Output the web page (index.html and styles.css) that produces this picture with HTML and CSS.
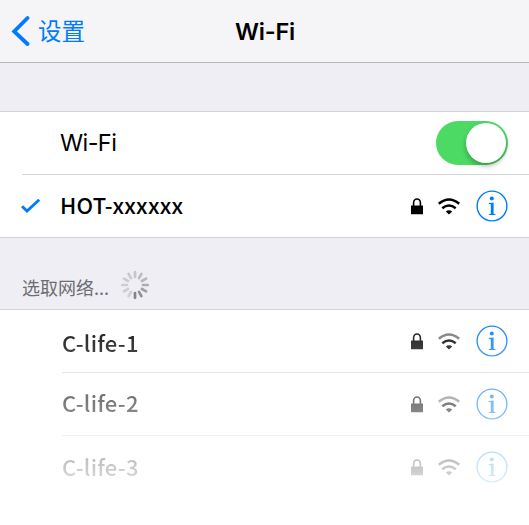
FILE: index.html
```html
<!DOCTYPE html>
<html lang="zh-CN">
<head>
<meta charset="utf-8">
<title>Wi-Fi</title>
<link rel="stylesheet" href="styles.css">
</head>
<body>
<svg class="symbols" width="0" height="0">
  <symbol id="lock" viewBox="0 0 12 17">
    <path d="M2.6 8V4.8a3.4 3.8 0 0 1 6.8 0V8" fill="none" stroke="currentColor" stroke-width="1.6"/>
    <rect x="0" y="7.6" width="12" height="8.6" rx=".5" fill="currentColor"/>
  </symbol>
  <symbol id="wifi" viewBox="0 0 22 17">
    <path d="M.8 5.8Q11-2.8 21.2 5.8" fill="none" stroke="var(--outer, currentColor)" stroke-width="2.5"/>
    <path d="M4.3 10.3Q11 4.7 17.7 10.3" fill="none" stroke="currentColor" stroke-width="2.5"/>
    <path d="M7.8 13.5Q11 11 14.2 13.5L11 16.6Z" fill="currentColor"/>
  </symbol>
  <symbol id="info" viewBox="0 0 32 32">
    <circle cx="16" cy="16" r="14.9" fill="none" stroke="currentColor" stroke-width="1.4"/>
    <circle cx="15.8" cy="8.4" r="2" fill="currentColor"/>
    <path d="M12.8 13.1l4.8-.7v11.4l2 .4v.8h-6.8v-.8l2-.4v-9.5l-2-.3z" fill="currentColor"/>
  </symbol>
</svg>
<header class="navbar">
  <div class="back">
    <svg width="20" height="32" viewBox="0 0 20 32"><path d="M17.5 3L4.2 16.5 17.5 29" fill="none" stroke="currentColor" stroke-width="3.8" stroke-linecap="round"/></svg>
    <span>设置</span>
  </div>
  <h1>Wi-Fi</h1>
</header>
<section class="group">
  <div class="row">
    <span class="name plain">Wi-Fi</span>
    <span class="switch"><span class="knob"></span></span>
  </div>
  <div class="row connected">
    <svg class="check" width="20" height="16" viewBox="0 0 20 16"><path d="M1 8.3L6 13 18.2 1.8" fill="none" stroke="currentColor" stroke-width="2.8"/></svg>
    <span class="name current">HOT-xxxxxx</span>
    <svg class="lock"><use href="#lock"/></svg>
    <svg class="wifi"><use href="#wifi"/></svg>
    <svg class="info"><use href="#info"/></svg>
  </div>
</section>
<div class="choose">
  <span>选取网络...</span>
  <svg class="spinner" width="30" height="30" viewBox="-15 -15 30 30" stroke="#858589" stroke-width="2.7" stroke-linecap="round">
    <path d="M0-8V-12.8" opacity=".38"/>
    <path d="M0-8V-12.8" opacity=".46" transform="rotate(30)"/>
    <path d="M0-8V-12.8" opacity=".52" transform="rotate(60)"/>
    <path d="M0-8V-12.8" opacity=".62" transform="rotate(90)"/>
    <path d="M0-8V-12.8" opacity=".75" transform="rotate(120)"/>
    <path d="M0-8V-12.8" opacity=".9" transform="rotate(150)"/>
    <path d="M0-8V-12.8" transform="rotate(180)"/>
    <path d="M0-8V-12.8" opacity=".3" transform="rotate(210)"/>
    <path d="M0-8V-12.8" opacity=".3" transform="rotate(240)"/>
    <path d="M0-8V-12.8" opacity=".3" transform="rotate(270)"/>
    <path d="M0-8V-12.8" opacity=".33" transform="rotate(300)"/>
    <path d="M0-8V-12.8" opacity=".35" transform="rotate(330)"/>
  </svg>
</div>
<section class="networks">
  <div class="row">
    <span class="name first">C-life-1</span>
    <svg class="lock"><use href="#lock"/></svg>
    <svg class="wifi weak"><use href="#wifi"/></svg>
    <svg class="info"><use href="#info"/></svg>
  </div>
  <div class="row">
    <span class="name second">C-life-2</span>
    <svg class="lock"><use href="#lock"/></svg>
    <svg class="wifi weak"><use href="#wifi"/></svg>
    <svg class="info"><use href="#info"/></svg>
  </div>
  <div class="row">
    <span class="name third">C-life-3</span>
    <svg class="lock"><use href="#lock"/></svg>
    <svg class="wifi"><use href="#wifi"/></svg>
    <svg class="info"><use href="#info"/></svg>
  </div>
</section>
</body>
</html>
```
FILE: styles.css
```css
* { box-sizing: border-box; }
body {
  margin: 0;
  width: 529px;
  height: 525px;
  overflow: hidden;
  background: #fff;
  color: #000;
  font-family: "Noto Sans CJK SC", sans-serif;
}
svg { display: block; flex: none; }
.symbols { position: absolute; }
.navbar {
  display: grid;
  grid-template-columns: 1fr auto 1fr;
  align-items: center;
  height: 63px;
  background: #f5f5f7;
  border-bottom: 1px solid #b9b9bd;
}
.back {
  display: flex;
  align-items: center;
  gap: 8px;
  padding-left: 10px;
  color: #007aff;
  font-size: 23.5px;
  line-height: 32px;
}
.back span { padding-bottom: 3px; }
h1 {
  margin: 0;
  padding: 2px 0 0 1px;
  font: 600 23.5px/32px Inter, sans-serif;
  letter-spacing: -.2px;
}
.group {
  border-top: 48px solid #efeef4;
  box-shadow: inset 0 1px #d3d3d9;
  border-bottom: 1px solid #d3d3d9;
  padding-top: 1px;
}
.row {
  display: flex;
  align-items: center;
  height: 63px;
  margin-left: 22px;
  padding-right: 21px;
  border-bottom: 1px solid #d6d6db;
}
.connected { border-bottom: 0; height: 62px; }
.name {
  flex: 1;
  font-size: 22px;
  font-weight: 500;
  line-height: 32px;
  letter-spacing: .25px;
}
.plain {
  padding: 0 0 1px 38px;
  font: 400 23.5px/32px Inter, sans-serif;
  letter-spacing: -.6px;
}
.current { margin: -4px 0 0 19px; }
.check { margin-left: -1px; color: #007aff; }
.switch {
  width: 72px;
  height: 44px;
  padding: 2px;
  border-radius: 22px;
  background: #4cd964;
}
.knob {
  display: block;
  width: 40px;
  height: 40px;
  margin-left: auto;
  border-radius: 50%;
  background: #fff;
  box-shadow: 0 3px 5px rgba(0, 0, 0, .28);
}
.lock { width: 12px; height: 17px; margin-right: 15px; }
.wifi { width: 22px; height: 17px; margin-right: 16px; }
.weak { --outer: rgba(0, 0, 0, .55); }
.info { width: 32px; height: 32px; color: #007aff; }
.choose {
  display: flex;
  align-items: center;
  gap: 11px;
  height: 72px;
  padding: 23px 0 0 22px;
  background: #efeef4;
  border-bottom: 1px solid #d3d3d9;
  color: #6d6d72;
  font-size: 18px;
}
.choose span { padding-top: 3px; }
.networks {
  height: 215px;
  -webkit-mask-image: linear-gradient(#000 0, rgba(0,0,0,.8) 32px, rgba(0,0,0,.5) 96px, rgba(0,0,0,.2) 160px, rgba(0,0,0,.02) 195px, transparent);
  mask-image: linear-gradient(#000 0, rgba(0,0,0,.8) 32px, rgba(0,0,0,.5) 96px, rgba(0,0,0,.2) 160px, rgba(0,0,0,.02) 195px, transparent);
}
.networks .row { margin-left: 62px; }
.first { padding-top: 2px; }
.second { padding-bottom: 5px; }
.third { padding-bottom: 2px; }
```
